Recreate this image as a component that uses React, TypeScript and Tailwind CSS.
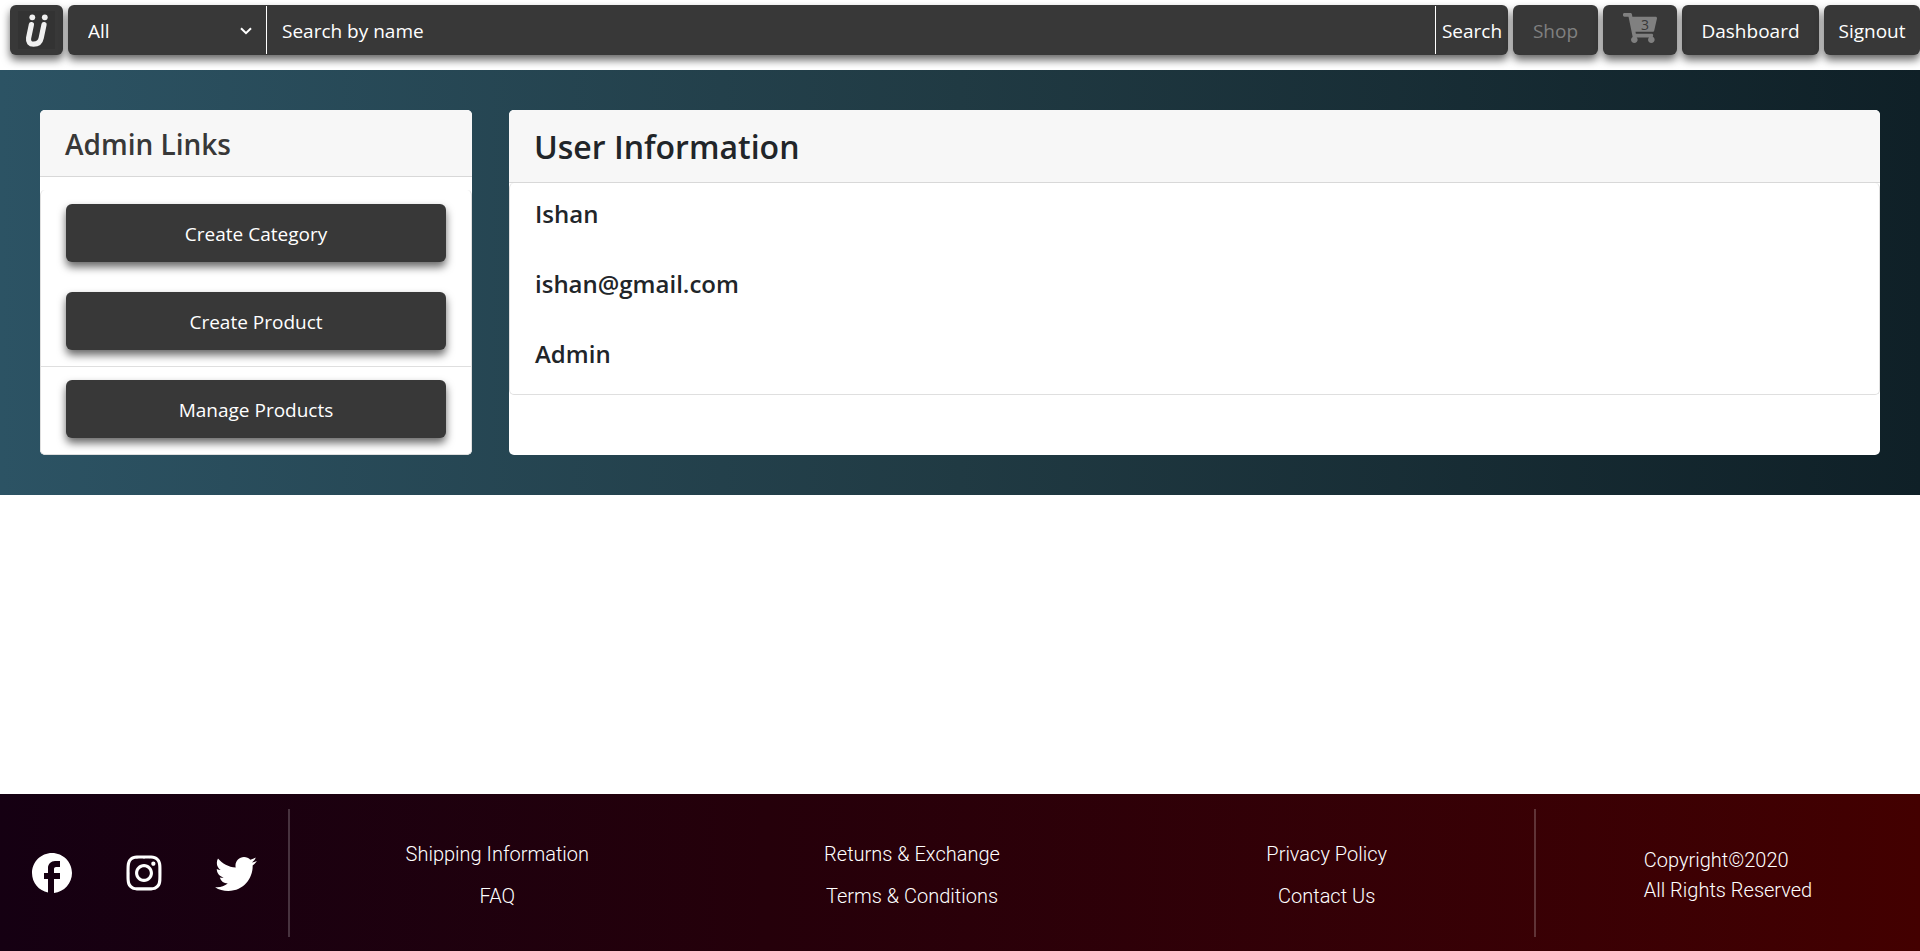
import React from "react";
import { FaInstagram, FaShoppingCart } from "react-icons/fa";
import { MdFacebook } from "react-icons/md";

const tile =
  "flex items-center justify-center rounded-md bg-[#383838] shadow-[0_5px_8px_rgba(0,0,0,0.6)]";

const adminLinks = ["Create Category", "Create Product", "Manage Products"];
const userInfo = ["Ishan", "ishan@gmail.com", "Admin"];
const footerLinks = [
  ["Shipping Information", "FAQ"],
  ["Returns & Exchange", "Terms & Conditions"],
  ["Privacy Policy", "Contact Us"],
];

function Logo() {
  return (
    <svg viewBox="0 0 37 38" className="h-[38px] w-[37px]" aria-hidden="true">
      <rect width="37" height="38" fill="#333333" />
      <circle cx="14.3" cy="6.3" r="2.9" fill="#f0f0f0" />
      <circle cx="26.8" cy="6.3" r="2.9" fill="#f0f0f0" />
      <path
        d="M13.4 13.6 L10.6 27 Q9.8 33 15.6 33.2 Q22 33.2 23.2 27 L26 13.6"
        fill="none"
        stroke="#f0f0f0"
        strokeWidth="5.2"
        strokeLinecap="round"
      />
    </svg>
  );
}

function TwitterIcon() {
  return (
    <svg viewBox="0 0 24 24" className="h-12 w-12" fill="currentColor" aria-hidden="true">
      <path d="M22.46 6c-.77.35-1.6.58-2.46.69.88-.53 1.56-1.37 1.88-2.38-.83.5-1.75.85-2.72 1.05C18.37 4.5 17.26 4 16 4c-2.35 0-4.27 1.92-4.27 4.29 0 .34.04.67.11.98C8.28 9.09 5.11 7.38 3 4.79c-.37.63-.58 1.37-.58 2.15 0 1.49.75 2.81 1.91 3.56-.71 0-1.37-.2-1.95-.5v.03c0 2.08 1.48 3.82 3.44 4.21a4.22 4.22 0 0 1-1.93.07 4.28 4.28 0 0 0 4 2.98 8.521 8.521 0 0 1-5.33 1.84c-.34 0-.68-.02-1.02-.06C3.44 20.29 5.7 21 8.12 21 16 21 20.33 14.46 20.33 8.79c0-.19 0-.37-.01-.56.84-.6 1.56-1.36 2.14-2.23z" />
    </svg>
  );
}

function Header() {
  return (
    <header className="flex h-[70px] items-start gap-[5px] bg-white pt-[5px] pl-[10px] text-[19px] text-white">
      <a href="#home" aria-label="Home" className={`${tile} h-[50px] w-[53px]`}>
        <Logo />
      </a>
      <form className={`${tile} h-[50px] min-w-0 flex-1`} onSubmit={(e) => e.preventDefault()}>
        <div className="relative h-12 w-[199px] border-r border-white">
          <select aria-label="Category" className="h-full w-full appearance-none bg-transparent pt-0.5 pl-5 outline-none">
            <option>All</option>
          </select>
          <svg viewBox="0 0 12 8" className="pointer-events-none absolute top-[21px] right-[14px] h-2 w-3" fill="none" stroke="white" strokeWidth="2">
            <path d="M1 1.2l5 5 5-5" />
          </svg>
        </div>
        <input
          type="search"
          aria-label="Search by name"
          placeholder="Search by name"
          className="h-12 min-w-0 flex-1 bg-transparent px-[15px] pt-0.5 outline-none placeholder:text-white"
        />
        <button className="h-12 w-[73px] border-l border-white pt-0.5">Search</button>
      </form>
      <a href="#shop" className={`${tile} h-[50px] w-[85px] pt-0.5 text-[#808080]`}>Shop</a>
      <a href="#cart" aria-label="Cart" className={`${tile} relative h-[50px] w-[74px]`}>
        <FaShoppingCart className="mb-1 h-[34px] w-[34px] text-[#808080]" />
        <span className="absolute top-[10px] left-[38px] text-[14px] leading-5 text-[#383838]">3</span>
      </a>
      <a href="#dashboard" className={`${tile} h-[50px] w-[137px] pt-0.5`}>Dashboard</a>
      <a href="#signout" className={`${tile} h-[50px] w-[96px] pt-0.5`}>Signout</a>
    </header>
  );
}

export default function App() {
  return (
    <div className="flex min-h-screen flex-col bg-white font-['Open_Sans','Noto_Sans',sans-serif] text-[#212529]">
      <Header />
      <main className="flex gap-[37px] bg-linear-to-l from-[#0f2027] via-[#203a43] to-[#2c5364] p-10">
        <section className="flex w-[432px] flex-col overflow-hidden rounded-[5px] bg-white">
          <h4 className="border-b border-[#d8d8d8] bg-[#f7f7f7] px-[25px] pt-4 pb-[14px] text-[28px] leading-9 font-semibold text-[#383838]">
            Admin Links
          </h4>
          <ul className="mt-[13px] rounded-[5px] border border-t-0 border-[#dfdfdf]">
            {adminLinks.map((label) => (
              <li key={label} className="px-[25px] pt-[14px] pb-4 last:border-t last:border-[#dfdfdf] last:pt-[13px]">
                <a href="#admin" className={`${tile} h-[58px] pt-0.5 text-[19px] text-white`}>{label}</a>
              </li>
            ))}
          </ul>
        </section>
        <section className="min-w-0 flex-1 overflow-hidden rounded-[5px] bg-white">
          <h3 className="border-b border-[#d8d8d8] bg-[#f7f7f7] px-[25px] pt-4 pb-[14px] text-[32px] leading-[42px] font-semibold">
            User Information
          </h3>
          <ul className="rounded-[5px] border border-t-0 border-[#dfdfdf] pb-px text-[24px] leading-[30px] font-semibold">
            {userInfo.map((line) => (
              <li key={line} className="px-[25px] pt-4 pb-6">{line}</li>
            ))}
          </ul>
        </section>
      </main>
      <footer className="mt-auto flex h-[157px] items-center bg-linear-to-r from-[#150012] via-[#25000a] via-40% to-[#430000] pt-px font-['Roboto',sans-serif] text-[20px] font-light text-white">
        <div className="flex h-32 w-[290px] items-center justify-between border-r-2 border-white/20 px-7">
          <a href="#facebook" aria-label="Facebook"><MdFacebook size={48} /></a>
          <a href="#instagram" aria-label="Instagram"><FaInstagram size={40} /></a>
          <a href="#twitter" aria-label="Twitter"><TwitterIcon /></a>
        </div>
        <nav className="grid flex-1 grid-cols-3 pt-1 text-center">
          {footerLinks.map((column) => (
            <ul key={column[0]} className="flex flex-col gap-3 leading-[30px]">
              {column.map((label) => (
                <li key={label}><a href="#info">{label}</a></li>
              ))}
            </ul>
          ))}
        </nav>
        <div className="flex h-32 w-[386px] items-center justify-center border-l-2 border-white/20 pt-1 leading-[30px]">
          <p>Copyright©2020<br />All Rights Reserved</p>
        </div>
      </footer>
    </div>
  );
}
